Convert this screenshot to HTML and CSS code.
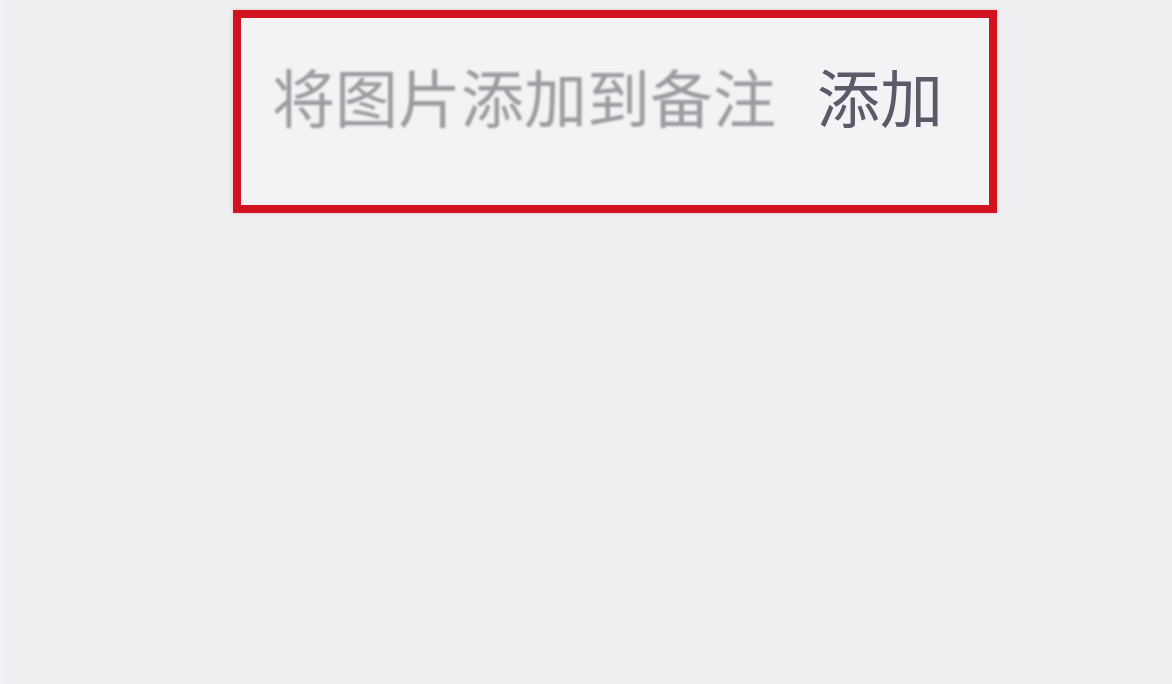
FILE: index.html
```html
<!DOCTYPE html>
<html lang="zh-CN">
<head>
<meta charset="utf-8">
<title>添加图片到备注</title>
<link rel="stylesheet" href="styles.css">
</head>
<body>
<main class="page">
  <section class="prompt">
    <span class="prompt-text">将图片添加到备注</span>
    <span class="prompt-action">添加</span>
  </section>
</main>
</body>
</html>
```

FILE: styles.css
```css
html, body {
  margin: 0;
  padding: 0;
  background: #eeeff1;
  width: 1172px;
  height: 684px;
  overflow: hidden;
}

.page {
  box-sizing: border-box;
  height: 684px;
  padding: 10px 0 0 233px;
  background: linear-gradient(to right, #f1f2f5 0, #eff0f3 8px, #eeeff1 10px);
}

.prompt {
  box-sizing: border-box;
  width: 764px;
  height: 203px;
  border: 8px solid #d3121f;
  background: #f3f3f5;
  padding: 45px 0 0 31px;
  display: flex;
  align-items: flex-start;
  gap: 41px;
  font-family: "Noto Sans CJK SC", "Noto Sans", sans-serif;
  font-size: 63px;
  line-height: 63px;
  font-weight: 400;
  box-shadow: 0 0 3px rgba(211, 18, 31, 0.25);
}

.prompt-text {
  color: #9c9ca0;
  filter: blur(0.9px);
}

.prompt-action {
  color: #5c5a68;
  filter: blur(0.6px);
}
```
